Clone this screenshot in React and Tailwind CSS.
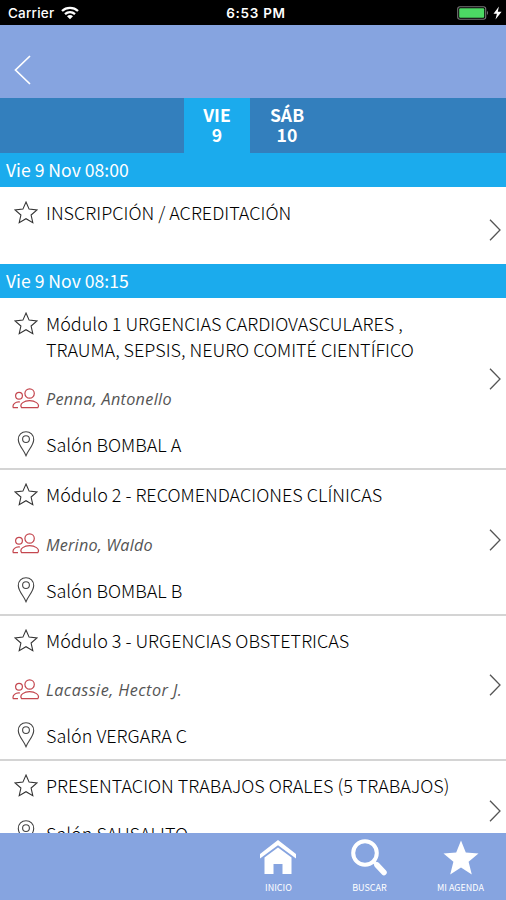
const STAR = "M12 1.5 L15.1 8.6 L23 9.4 L17.1 14.5 L18.8 22.2 L12 18.2 L5.2 22.2 L6.9 14.5 L1 9.4 L8.9 8.6 Z";

function StarIcon() {
  return (
    <svg viewBox="0 0 24 24" className="h-[24px] w-[24px] shrink-0 -translate-y-[0.5px]" fill="none" stroke="#333" strokeWidth="1.1" strokeLinejoin="miter">
      <path d={STAR} />
    </svg>
  );
}

function PeopleIcon() {
  return (
    <svg viewBox="0 0 28 22" className="h-[22px] w-[28px] shrink-0 -translate-y-[0.5px]" fill="none" stroke="#c4474f" strokeWidth="1.2">
      <circle cx="17.6" cy="6" r="4.7" />
      <circle cx="7" cy="8.2" r="3.4" />
      <path d="M9.6 20.2 C6.8 16 12.8 13.2 17.5 13.2 C22.4 13.2 28.6 16 25.8 20.2 Z" />
      <path d="M8 14.5 C3.6 13.8 0 17 1.3 20.2 H6" />
    </svg>
  );
}

function PinIcon() {
  return (
    <svg viewBox="0 0 18 26" className="h-[26px] w-[18px] shrink-0 -translate-y-[1.2px]" fill="none" stroke="#444" strokeWidth="1.1">
      <path d="M9 25 C7.2 19.5 1.3 14.5 1.3 8.6 C1.3 4.2 4.6 1 9 1 C13.4 1 16.7 4.2 16.7 8.6 C16.7 14.5 10.8 19.5 9 25 Z" />
      <circle cx="9" cy="8.3" r="3.4" />
    </svg>
  );
}

function Chevron({ className }) {
  return (
    <svg viewBox="0 0 12 22" className={`mr-[5px] ml-auto h-[22px] w-[12px] shrink-0 ${className}`} fill="none" stroke="#555" strokeWidth="1.3">
      <path d="M1 0.8 L11 11 L1 21.2" />
    </svg>
  );
}

function Section({ children }) {
  return (
    <div className="flex h-[34px] shrink-0 items-center bg-[#1babed] pl-[6px] text-[17.6px] leading-[34px] font-normal text-white">
      <span>{children}</span>
    </div>
  );
}

function Session({ title, person, personClass, place, placeGap = "mt-[20px]", chevron, className }) {
  return (
    <div className={`flex shrink-0 items-start ${className}`}>
      <div className="flex flex-col text-[18px] leading-[26px] font-light whitespace-nowrap text-black">
        <div className="flex">
          <div className="flex h-[26px] w-[46px] items-center pl-[13.5px]"><StarIcon /></div>
          <div className="-translate-y-px">
            {title.map((text) => (
              <div key={text}>{text}</div>
            ))}
          </div>
        </div>
        {person && (
          <div className="mt-[23px] flex items-center">
            <div className="flex w-[46px] pl-[12px]"><PeopleIcon /></div>
            <span className={`font-['Open_Sans','Noto_Sans',sans-serif] text-[16.2px] font-normal text-[#555] italic ${personClass}`}>{person}</span>
          </div>
        )}
        {place && (
          <div className={`flex items-center ${placeGap}`}>
            <div className="flex w-[46px] pl-[16.5px]"><PinIcon /></div>
            <span className="-translate-y-px">{place}</span>
          </div>
        )}
      </div>
      <Chevron className={chevron} />
    </div>
  );
}

function NavItem({ label, children }) {
  return (
    <div className="flex w-[91px] flex-col items-center pt-[5px]">
      {children}
      <span className="mt-[6px] text-[9px] leading-[12px] whitespace-nowrap text-white">{label}</span>
    </div>
  );
}

export default function App() {
  return (
    <div className="flex h-[900px] w-[506px] flex-col overflow-hidden bg-white font-['Noto_Sans_CJK_SC','Noto_Sans',sans-serif]">
      <div className="grid h-[25px] shrink-0 grid-cols-3 items-center bg-black pt-px font-['Inter','Roboto',sans-serif] text-[13.5px] font-medium text-white">
        <div className="flex items-center gap-[7px] pl-[8px]">
          <span className="tracking-[0.2px]">Carrier</span>
          <svg viewBox="0 0 18 14" className="h-[14px] w-[18px]" fill="none" stroke="white" strokeWidth="2.3">
            <path d="M1 5 C5.4 0.9 12.6 0.9 17 5" />
            <path d="M4 8.2 C6.9 5.6 11.1 5.6 14 8.2" />
            <path d="M9 13.3 L6 10.3 C7.7 8.7 10.3 8.7 12 10.3 Z" fill="white" stroke="none" />
          </svg>
        </div>
        <div className="pl-[6px] text-center font-semibold tracking-[0.7px]">6:53 PM</div>
        <div className="flex items-center justify-end gap-[4px] pr-[4px]">
          <svg viewBox="0 0 32 14" className="h-[14px] w-[32px]">
            <rect x="0.7" y="0.7" width="28" height="12.6" rx="2.2" fill="none" stroke="#777" strokeWidth="1.1" />
            <rect x="2.2" y="2.2" width="25" height="9.6" rx="1" fill="#4cd964" />
            <path d="M30 4.8 Q32 7 30 9.2 Z" fill="#777" />
          </svg>
          <svg viewBox="0 0 9 14" className="h-[14px] w-[9px]" fill="white">
            <path d="M5.9 0.5 L0.5 7.8 H3.9 L2.5 13.5 L8.6 5.7 H4.8 Z" />
          </svg>
        </div>
      </div>

      <div className="flex h-[73px] shrink-0 items-center bg-[#86a4e0] pt-[17px] pl-[14px]">
        <svg viewBox="0 0 17 30" className="h-[30px] w-[17px]" fill="none" stroke="white" strokeWidth="1.7">
          <path d="M16 1 L1.5 15 L16 29" />
        </svg>
      </div>

      <div className="flex h-[55px] shrink-0 bg-[#337fbd] pl-[184px] text-center text-[17.6px] leading-[20px] font-bold text-white">
        <div className="w-[66px] bg-[#1babed] pt-[7px]">
          <div>VIE</div>
          <div>9</div>
        </div>
        <div className="w-[74px] pt-[7px]">
          <div>SÁB</div>
          <div>10</div>
        </div>
      </div>

      <div className="flex h-[680px] shrink-0 flex-col overflow-hidden">
        <Section>Vie 9 Nov 08:00</Section>
        <Session className="h-[77px] pt-[13px]" chevron="mt-[19px]" title={["INSCRIPCIÓN / ACREDITACIÓN"]} />
        <Section>Vie 9 Nov 08:15</Section>
        <Session
          className="h-[172px] border-b-2 border-[#d4d4d4] pt-[13px]"
          chevron="mt-[56.5px]"
          title={["Módulo 1 URGENCIAS CARDIOVASCULARES ,", "TRAUMA, SEPSIS, NEURO COMITÉ CIENTÍFICO"]}
          person="Penna, Antonello"
          personClass="tracking-[0.32px]"
          place="Salón BOMBAL A"
        />
        <Session
          className="h-[146px] border-b-2 border-[#d4d4d4] pt-[12px]"
          chevron="mt-[46.5px]"
          title={["Módulo 2 - RECOMENDACIONES CLÍNICAS"]}
          person="Merino, Waldo"
          personClass="tracking-[0.2px] translate-y-px"
          place="Salón BOMBAL B"
          placeGap="mt-[21px]"
        />
        <Session
          className="h-[145px] border-b-2 border-[#d4d4d4] pt-[12px]"
          chevron="mt-[46px]"
          title={["Módulo 3 - URGENCIAS OBSTETRICAS"]}
          person="Lacassie, Hector J."
          personClass="tracking-[0.46px]"
          place="Salón VERGARA C"
        />
        <Session
          className="h-[120px] pt-[12px]"
          chevron="mt-[27px]"
          title={["PRESENTACION TRABAJOS ORALES (5 TRABAJOS)"]}
          place="Salón SAUSALITO"
          placeGap="mt-[22px]"
        />
      </div>

      <div className="flex h-[67px] shrink-0 justify-end bg-[#86a4e0]">
        <NavItem label="INICIO">
          <svg viewBox="0 0 38 38" className="h-[38px] w-[38px] -translate-x-px" fill="white">
            <path d="M19 2 L37 16 V20.5 L19 7.2 L1 20.5 V16 Z" />
            <path d="M19 9.5 L32.5 19.5 V36 H23.5 V26 H14.5 V36 H5.5 V19.5 Z" />
          </svg>
        </NavItem>
        <NavItem label="BUSCAR">
          <svg viewBox="0 0 38 38" className="h-[38px] w-[38px] -translate-x-px" fill="none" stroke="white">
            <circle cx="15" cy="15" r="11.8" strokeWidth="4" />
            <path d="M23.5 23.5 L27 27" strokeWidth="3.5" />
            <path d="M27 27 L34 34.5" strokeWidth="5.5" strokeLinecap="round" />
          </svg>
        </NavItem>
        <NavItem label="MI AGENDA">
          <svg viewBox="0 0 38 38" className="h-[38px] w-[38px]" fill="white">
            <path d="M19 2.5 L23.8 14.6 L36.5 15.5 L26.6 23.7 L29.8 36.5 L19 29.4 L8.2 36.5 L11.4 23.7 L1.5 15.5 L14.2 14.6 Z" />
          </svg>
        </NavItem>
      </div>
    </div>
  );
}
